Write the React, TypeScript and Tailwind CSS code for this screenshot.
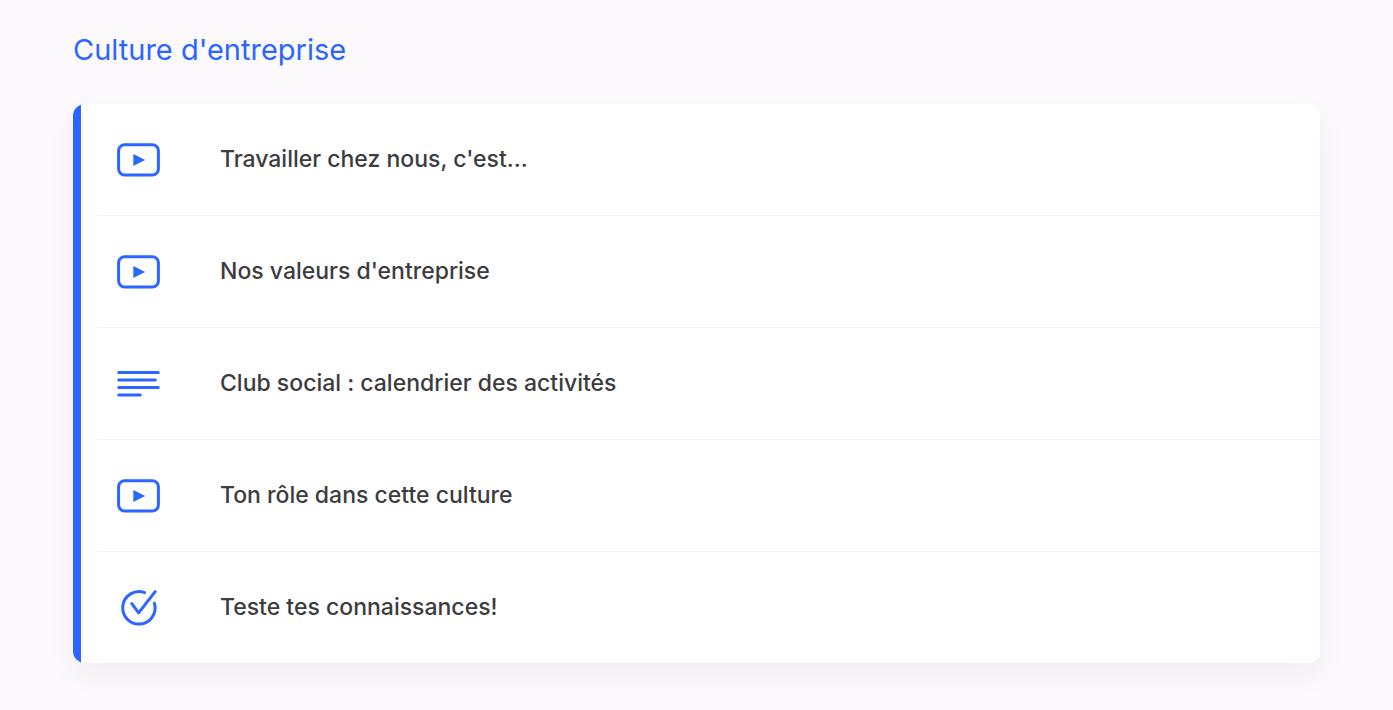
type LessonKind = 'video' | 'text' | 'quiz';

const lessons: { kind: LessonKind; title: string }[] = [
  { kind: 'video', title: "Travailler chez nous, c'est..." },
  { kind: 'video', title: "Nos valeurs d'entreprise" },
  { kind: 'text', title: 'Club social : calendrier des activités' },
  { kind: 'video', title: 'Ton rôle dans cette culture' },
  { kind: 'quiz', title: 'Teste tes connaissances!' },
];

function LessonIcon({ kind }: { kind: LessonKind }) {
  return (
    <svg
      className="h-11 w-11 shrink-0 text-[#2a66ff]"
      viewBox="0 0 44 44"
      fill="none"
      stroke="currentColor"
      strokeLinecap="round"
      aria-hidden="true"
    >
      {kind === 'video' && (
        <>
          <rect x="2.6" y="6.8" width="39.8" height="30.2" rx="6" strokeWidth="3" />
          <path d="M17.3 16v12L29.2 22z" fill="currentColor" stroke="none" />
        </>
      )}
      {kind === 'text' && <path d="M2.7 10.5h39.6M2.7 18h36.6M2.7 25.5h39.6M2.7 33h21.6" strokeWidth="3" />}
      {kind === 'quiz' && (
        <>
          <path d="M28.6 6.7A16.2 16.2 0 1 0 38.4 17.2" strokeWidth="3" />
          <path d="M15.8 17.6l6.8 9.2L39.2 5.6" strokeWidth="3" strokeLinejoin="round" />
        </>
      )}
    </svg>
  );
}

export default function App() {
  return (
    <main className="min-h-screen bg-[#fbf9fc] px-[73px] pt-8 pb-12 font-['Inter','Liberation_Sans',sans-serif] [font-variant-ligatures:none]">
      <h1 className="text-[29px] leading-9 text-[#2a66ff]">Culture d'entreprise</h1>
      <section className="mt-9 flex overflow-hidden rounded-xl bg-white shadow-[0_12px_30px_rgba(40,30,60,0.05)]">
        <div className="w-2 shrink-0 bg-[#2a66ff]" />
        <ul className="flex-1 divide-y divide-[#f5f4f6] pl-4">
          {lessons.map(({ kind, title }) => (
            <li key={title} className="box-content flex h-[111px] items-center gap-[60px] pl-[19px]">
              <LessonIcon kind={kind} />
              <span className="pb-0.5 text-[23px] leading-8 font-medium text-[#3c3c3e]">{title}</span>
            </li>
          ))}
        </ul>
      </section>
    </main>
  );
}
